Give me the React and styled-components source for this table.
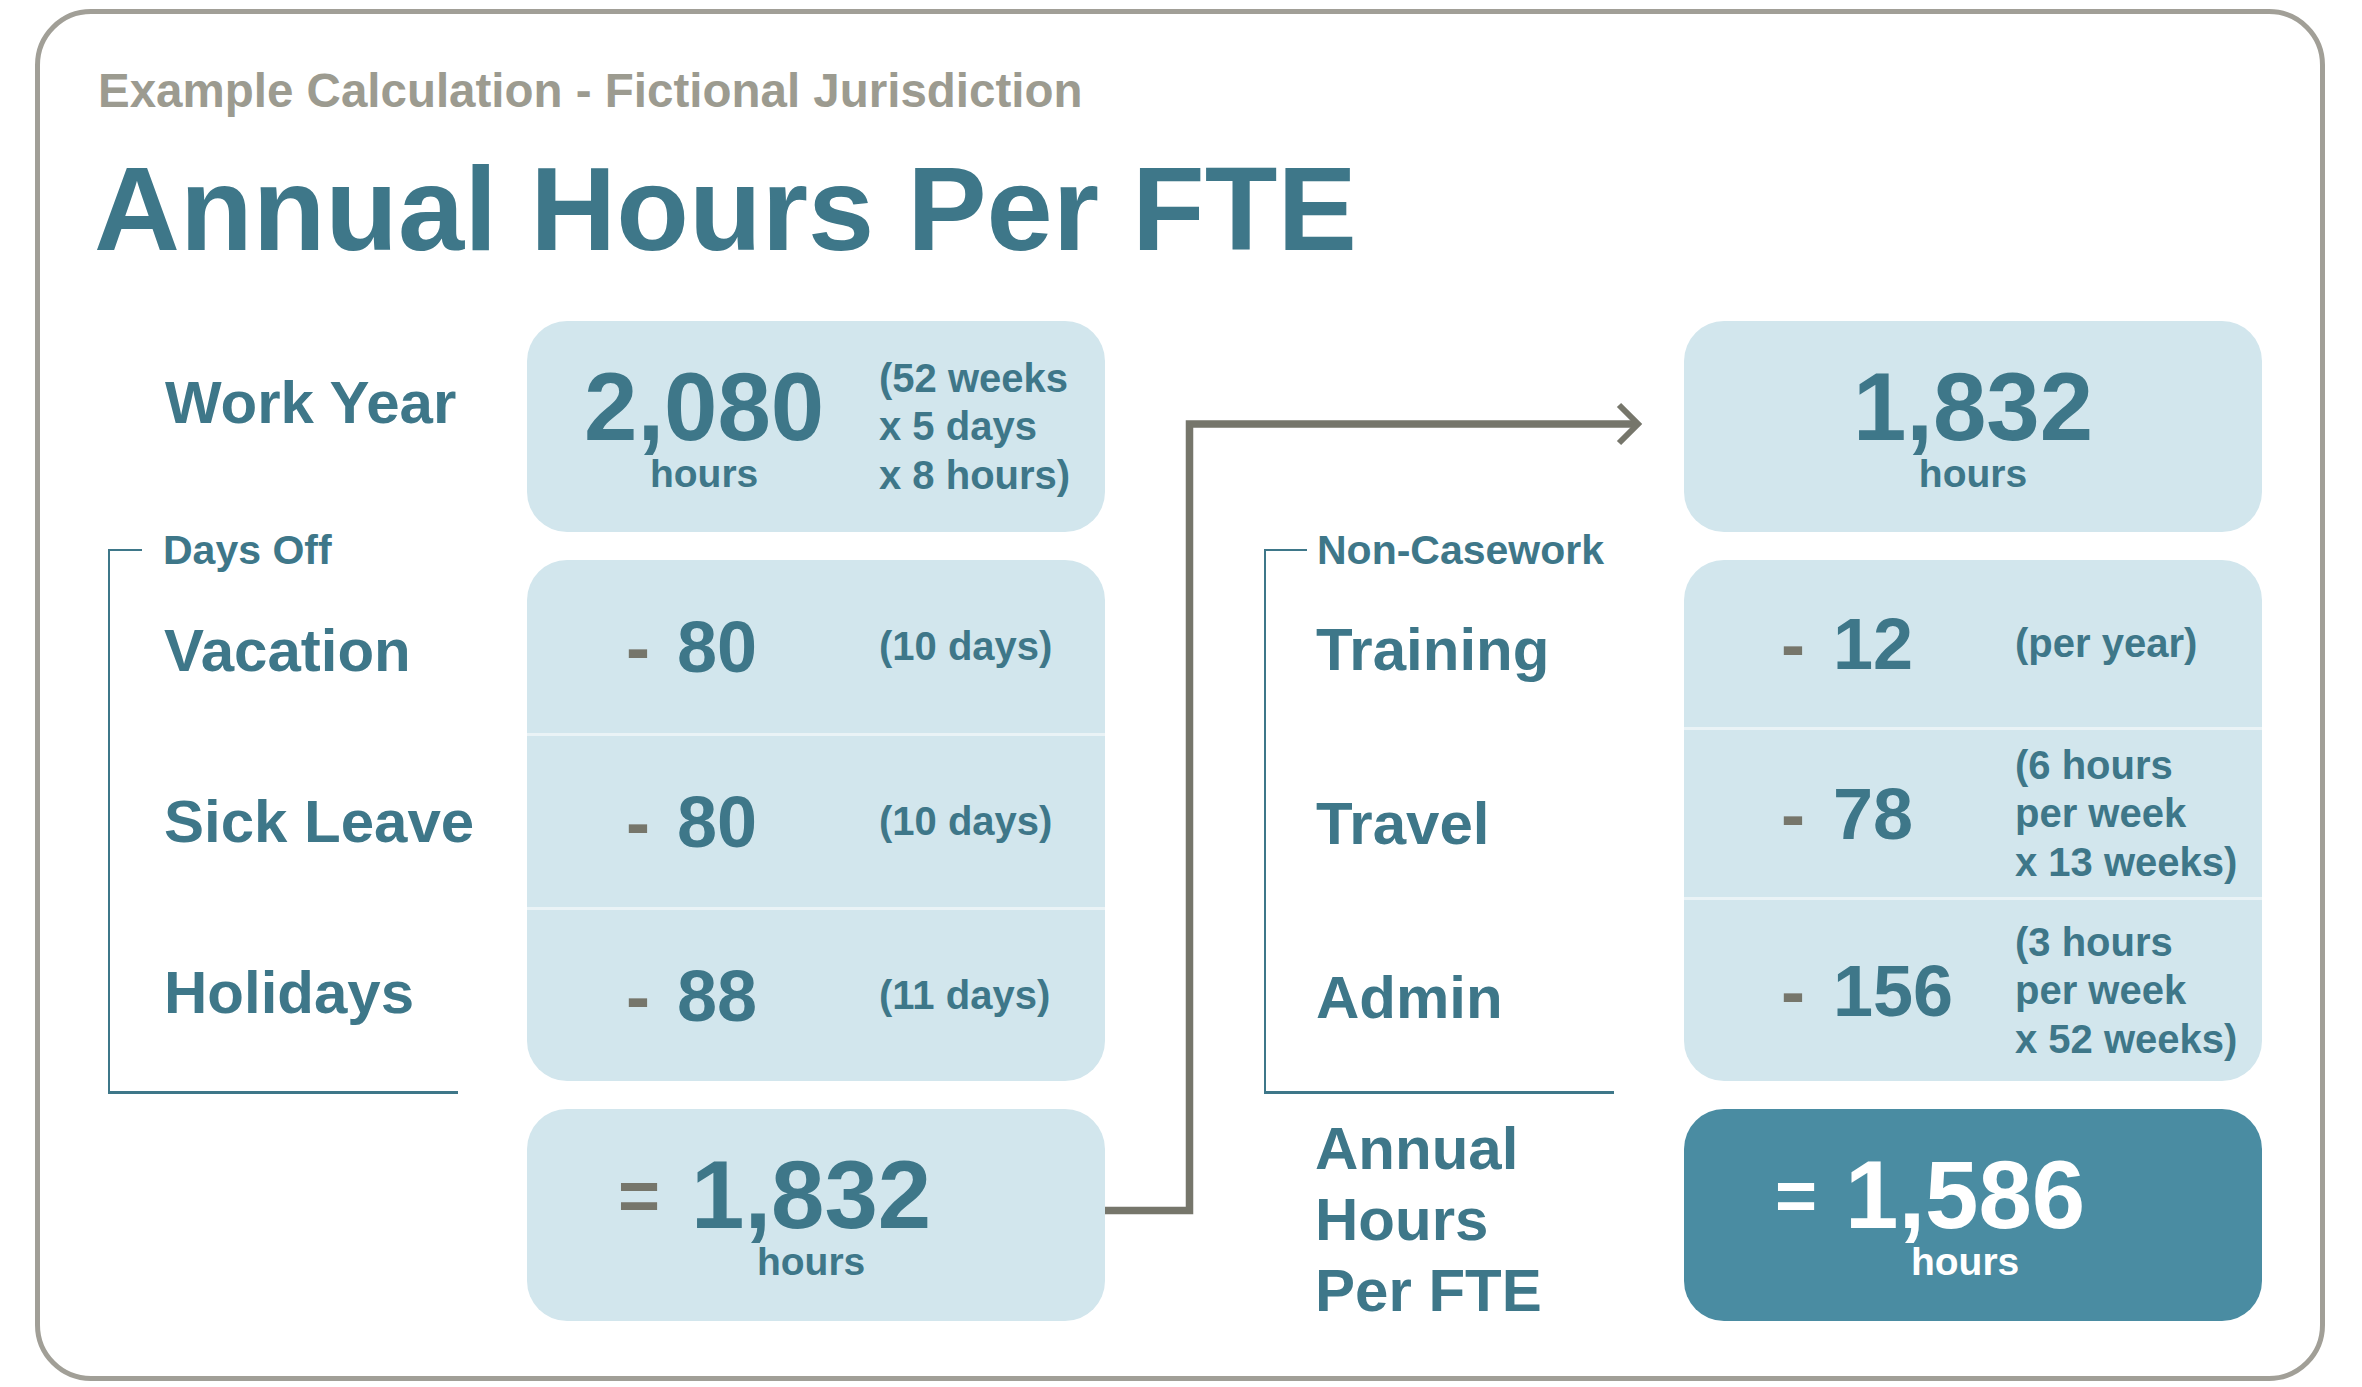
import React from "react";
import styled, { createGlobalStyle } from "styled-components";

const teal = "#3e7789";
const grey = "#76766b";

const GlobalStyle = createGlobalStyle`
  html, body {
    margin: 0;
    padding: 0;
    background: #fff;
  }
  body {
    font-family: "Liberation Sans", Arial, sans-serif;
  }
`;

const place = ({ $col, $row }) => `
  grid-column: ${$col};
  grid-row: ${$row};
`;

const Card = styled.section`
  box-sizing: border-box;
  width: 2290px;
  height: 1372px;
  margin: 9px 0 0 35px;
  padding: 54px 0 0 54px;
  border: 5px solid #a19f97;
  border-radius: 56px;
  background: #fff;
  font-family: "Liberation Sans", Arial, sans-serif;
  font-weight: 700;
  color: ${teal};
`;

const Eyebrow = styled.div`
  margin-left: 4px;
  font-size: 47.5px;
  line-height: 46px;
  color: #9c9b90;
`;

const Title = styled.h1`
  margin: 35px 0 0;
  font-size: 119px;
  line-height: 119px;
  font-weight: 700;
`;

const Board = styled.div`
  position: relative;
  margin: 53px 0 0 14px;
  display: grid;
  grid-template-columns: 419px 578px 159px 420px 578px;
  grid-template-rows: 211px 521px 212px;
  row-gap: 28px;
`;

const Label = styled.div`
  ${place}
  align-self: start;
  margin-top: ${(p) => p.$top}px;
  padding-left: ${(p) => p.$indent}px;
  font-size: 60px;
  line-height: ${(p) => p.$lh || 60}px;
  white-space: nowrap;
`;

const Bracket = styled.div`
  ${place}
  width: 348px;
  margin: -10px 0 -13px;
  border-left: 2px solid ${teal};
  border-bottom: 3px solid ${teal};
  display: flex;
  flex-direction: column;
`;

const BracketHeading = styled.div`
  display: flex;
  align-items: center;
  height: 40px;
  margin: -20px 0 0 -2px;
  font-size: 41px;
  line-height: 40px;
  white-space: nowrap;

  &::before {
    content: "";
    flex: 0 0 ${(p) => p.$tick}px;
    height: 2px;
    margin-right: ${(p) => p.$gap}px;
    background: ${teal};
  }
`;

const LabelList = styled.div`
  display: grid;
  grid-auto-rows: ${(p) => p.$step}px;
  align-items: center;
  margin-top: ${(p) => p.$offset}px;
  padding-left: ${(p) => p.$indent}px;
  font-size: 60px;
  line-height: 60px;
  white-space: nowrap;
`;

const Panel = styled.div`
  ${place}
  display: flex;
  flex-direction: column;
  border-radius: 40px;
  overflow: hidden;
  background: ${(p) => (p.$dark ? "#4a8ca2" : "#d2e6ed")};
  color: ${(p) => (p.$dark ? "#fff" : teal)};
`;

const Line = styled.div`
  flex: 1;
  display: flex;
  align-items: center;
  justify-content: ${(p) => (p.$center ? "center" : "flex-start")};
  padding-left: ${(p) => p.$pad || 0}px;
`;

const Row = styled.div`
  flex: 0 0 ${(p) => p.$h}px;
  display: flex;
  align-items: center;
  padding-left: ${(p) => p.$pad}px;

  & + & {
    border-top: 3px solid #eaf3f6;
  }
`;

const Slot = styled.div`
  flex: 0 0 ${(p) => p.$w}px;
  display: flex;
`;

const Amount = styled.div`
  flex: 0 0 ${(p) => p.$w}px;
  font-size: 72px;
  line-height: 72px;
  white-space: nowrap;
`;

const Minus = styled.span`
  display: inline-block;
  width: ${(p) => p.$w}px;
  color: ${grey};
`;

const Notes = styled.div`
  display: flex;
  flex-direction: column;
  font-size: 40px;
  line-height: 48.5px;
  white-space: nowrap;
`;

const Sum = styled.div`
  display: flex;
  align-items: flex-start;
`;

const Sign = styled.span`
  flex: 0 0 ${(p) => p.$w}px;
  font-size: 72px;
  line-height: 94px;
  color: ${(p) => (p.$onDark ? "#fff" : grey)};
`;

const Total = styled.div`
  display: flex;
  flex-direction: column;
  align-items: center;
`;

const Big = styled.span`
  font-size: 96px;
  line-height: 94px;
  white-space: nowrap;
`;

const Unit = styled.span`
  font-size: 39px;
  line-height: 40px;
`;

const Connector = styled.svg`
  position: absolute;
  left: 0;
  top: 0;
  width: 2154px;
  height: 1000px;
  overflow: visible;
  pointer-events: none;
`;

const daysOff = [
  { label: "Vacation", amount: "80", notes: ["(10 days)"], h: 173 },
  { label: "Sick Leave", amount: "80", notes: ["(10 days)"], h: 171 },
  { label: "Holidays", amount: "88", notes: ["(11 days)"], h: 171 },
];

const nonCasework = [
  { label: "Training", amount: "12", notes: ["(per year)"], h: 167 },
  {
    label: "Travel",
    amount: "78",
    notes: ["(6 hours", "per week", "x 13 weeks)"],
    h: 167,
  },
  {
    label: "Admin",
    amount: "156",
    notes: ["(3 hours", "per week", "x 52 weeks)"],
    h: 181,
  },
];

const TotalHours = ({ value }) => (
  <Total>
    <Big>{value}</Big>
    <Unit>hours</Unit>
  </Total>
);

const Deductions = ({ items, col, pad, amountW, minusW }) => (
  <Panel $col={col} $row={2}>
    {items.map((item) => (
      <Row key={item.label} $h={item.h} $pad={pad}>
        <Amount $w={amountW}>
          <Minus $w={minusW}>-</Minus>
          {item.amount}
        </Amount>
        <Notes>
          {item.notes.map((n) => (
            <span key={n}>{n}</span>
          ))}
        </Notes>
      </Row>
    ))}
  </Panel>
);

export default function App() {
  return (
    <>
      <GlobalStyle />
      <Card>
        <Eyebrow>Example Calculation - Fictional Jurisdiction</Eyebrow>
        <Title>Annual Hours Per FTE</Title>

        <Board>
          <Label $col={1} $row={1} $top={52} $indent={57}>
            Work Year
          </Label>
          <Panel $col={2} $row={1}>
            <Line $pad={57}>
              <Slot $w={295}>
                <TotalHours value="2,080" />
              </Slot>
              <Notes>
                <span>(52 weeks</span>
                <span>x 5 days</span>
                <span>x 8 hours)</span>
              </Notes>
            </Line>
          </Panel>
          <Panel $col={5} $row={1}>
            <Line $center>
              <TotalHours value="1,832" />
            </Line>
          </Panel>

          <Bracket $col={1} $row={2}>
            <BracketHeading $tick={34} $gap={21}>
              Days Off
            </BracketHeading>
            <LabelList $step={171} $offset={-5} $indent={54}>
              {daysOff.map((d) => (
                <div key={d.label}>{d.label}</div>
              ))}
            </LabelList>
          </Bracket>
          <Deductions items={daysOff} col={2} pad={99} amountW={253} minusW={51} />

          <Bracket $col={4} $row={2}>
            <BracketHeading $tick={43} $gap={10}>
              Non-Casework
            </BracketHeading>
            <LabelList $step={174} $offset={-7} $indent={50}>
              {nonCasework.map((d) => (
                <div key={d.label}>{d.label}</div>
              ))}
            </LabelList>
          </Bracket>
          <Deductions
            items={nonCasework}
            col={5}
            pad={97}
            amountW={234}
            minusW={52}
          />

          <Panel $col={2} $row={3}>
            <Line $pad={91}>
              <Sum>
                <Sign $w={73}>=</Sign>
                <TotalHours value="1,832" />
              </Sum>
            </Line>
          </Panel>
          <Label $col={4} $row={3} $top={4} $indent={51} $lh={71}>
            Annual
            <br />
            Hours
            <br />
            Per FTE
          </Label>
          <Panel $col={5} $row={3} $dark>
            <Line $pad={91}>
              <Sum>
                <Sign $w={70} $onDark>
                  =
                </Sign>
                <TotalHours value="1,586" />
              </Sum>
            </Line>
          </Panel>

          <Connector viewBox="0 0 2154 1000">
            <polyline
              points="997,889.5 1081.5,889.5 1081.5,103 1528,103"
              fill="none"
              stroke={grey}
              strokeWidth="7.5"
            />
            <polyline
              points="1511,84 1530,103 1511,122"
              fill="none"
              stroke={grey}
              strokeWidth="6"
            />
          </Connector>
        </Board>
      </Card>
    </>
  );
}
